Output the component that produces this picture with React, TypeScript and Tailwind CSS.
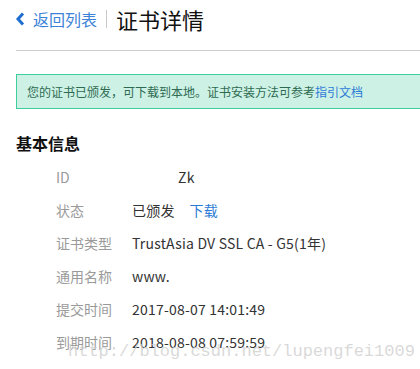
const rows: { label: string; value: React.ReactNode }[] = [
  { label: "ID", value: <span className="pl-[46px]">Zk</span> },
  {
    label: "状态",
    value: (
      <span>
        已颁发<a className="ml-[15px] text-[#2d7ad6]">下载</a>
      </span>
    ),
  },
  { label: "证书类型", value: "TrustAsia DV SSL CA - G5(1年)" },
  { label: "通用名称", value: "www." },
  { label: "提交时间", value: "2017-08-07 14:01:49" },
  { label: "到期时间", value: "2018-08-08 07:59:59" },
]

const App = () => {
  return (
    <div className="relative w-[420px] h-[369px] overflow-hidden bg-white font-['Noto_Sans_CJK_SC',sans-serif]">
      <header className="flex items-center h-[38px] pl-[15px]">
        <svg width="10" height="14" viewBox="0 0 10 14" className="mr-[8px]">
          <path d="M8 1.5 L3 7 L8 12.5" fill="none" stroke="#1f6fd0" strokeWidth="3" />
        </svg>
        <span className="text-[16px] text-[#3b82d8] leading-none">返回列表</span>
        <span className="mx-[9px] h-[18px] w-px bg-[#c8c8c8]" />
        <h1 className="text-[22px] text-[#111] leading-none">证书详情</h1>
      </header>
      <div className="ml-[16px] mt-[12px] border-t border-[#cccccc]" />
      <div className="ml-[16px] mt-[23px] -mr-[10px] h-[35px] flex items-center pl-[10px] border border-[#3ccf9c] bg-[#cdf2e5] text-[12px] text-[#2e6a52]">
        您的证书已颁发，可下载到本地。证书安装方法可参考<span className="text-[#2d7ad6]">指引文档</span>
      </div>
      <h2 className="ml-[16px] mt-[22px] text-[16px] font-bold text-[#111] leading-[24px]">基本信息</h2>
      <dl className="mt-[6px] text-[14px]">
        {rows.map((r) => (
          <div key={r.label} className="flex items-center h-[33px] pl-[56px]">
            <dt className="w-[76px] text-[#9a9a9a]">{r.label}</dt>
            <dd className="text-[#333] tracking-[0.2px]">{r.value}</dd>
          </div>
        ))}
      </dl>
      <div className="absolute left-[68px] top-[339px] text-[17px] text-[#cfcfcf]/80 font-['Liberation_Mono',monospace] whitespace-nowrap pointer-events-none">
        http://blog.csdn.net/lupengfei1009
      </div>
    </div>
  )
}

export default App
